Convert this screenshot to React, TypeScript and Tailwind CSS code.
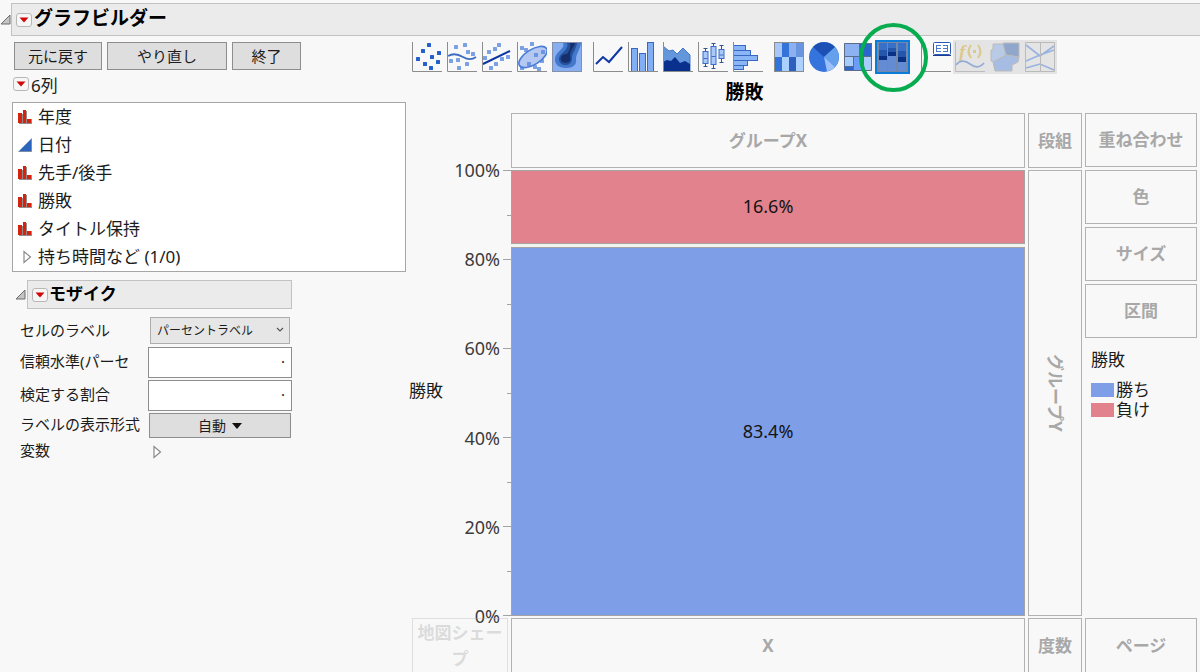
import type { ReactNode } from "react";
import { clsx } from "clsx";

type Point = [number, number];

const COLUMNS = [
  { name: "年度", kind: "nominal" },
  { name: "日付", kind: "continuous" },
  { name: "先手/後手", kind: "nominal" },
  { name: "勝敗", kind: "nominal" },
  { name: "タイトル保持", kind: "nominal" },
  { name: "持ち時間など (1/0)", kind: "group" },
];

const CELLS = [
  { name: "負け", share: 16.6, color: "bg-[#e2828c]" },
  { name: "勝ち", share: 83.4, color: "bg-[#7f9ee8]" },
];

const TICKS = ["100%", "80%", "60%", "40%", "20%", "0%"];

/* Small marks */
function RedTriangle({ label }: { label: string }) {
  return (
    <button
      aria-label={label}
      className="flex h-[14px] w-[16px] shrink-0 items-center justify-center rounded-[3px] border border-[#b8b8b8] bg-[#f6f6f6]"
    >
      <svg width="10" height="6" viewBox="0 0 10 6">
        <path d="M0.5 0.5H9.5L5 5.5Z" fill="#d00808" />
      </svg>
    </button>
  );
}

function OpenMark() {
  return (
    <svg width="11" height="11" viewBox="0 0 11 11" className="shrink-0">
      <path d="M10 1V10H1Z" fill="#c4c4c4" stroke="#6e6e6e" />
    </svg>
  );
}

function ClosedMark() {
  return (
    <svg width="9" height="14" viewBox="0 0 9 14" className="shrink-0">
      <path d="M1 1.5V12.5L7.5 7Z" fill="#fff" stroke="#8a8a8a" strokeWidth="1.2" />
    </svg>
  );
}

function ColumnIcon({ kind }: { kind: string }) {
  if (kind === "group") {
    return (
      <span className="flex w-[14px] justify-end">
        <ClosedMark />
      </span>
    );
  }
  if (kind === "continuous") {
    return (
      <svg width="14" height="14" viewBox="0 0 14 14">
        <path d="M13.5 0.5V13.5H0.5Z" fill="#2c66bc" />
        <path d="M0.5 13.5H13.5V0.5" fill="none" stroke="#7d8ba3" />
      </svg>
    );
  }
  return (
    <svg width="14" height="14" viewBox="0 0 14 14">
      <path d="M1 14V4H5V1H9V9H14V14Z" fill="#9a8c8a" />
      <path d="M0 3H4V13H0ZM5 0H8V13H5ZM9 9H13V13H9Z" fill="#d42410" />
    </svg>
  );
}

/* Toolbar icons */
function Dots({ points, fill }: { points: Point[]; fill: string }) {
  return (
    <>
      {points.map(([x, y]) => (
        <rect key={`${x}-${y}`} x={x - 2} y={y - 2} width="4" height="4" rx="0.5" fill={fill} />
      ))}
    </>
  );
}

function Icon({ axes = true, children }: { axes?: boolean; children: ReactNode }) {
  return (
    <svg width="30" height="30" viewBox="0 0 30 30">
      {children}
      {axes && <path d="M0.5 0V29.5H30" fill="none" stroke="#8c8c8c" />}
    </svg>
  );
}

function Tool({ label, disabled, children }: { label: string; disabled?: boolean; children: ReactNode }) {
  return (
    <button aria-label={label} disabled={disabled} className={clsx(disabled && "opacity-45")}>
      {children}
    </button>
  );
}

function BoxGlyph({ x, top, bottom, high, low }: { x: number; top: number; bottom: number; high: number; low: number }) {
  return (
    <g stroke="#3c6cc4">
      <path d={`M${x} ${high}V${low}M${x - 2} ${high}H${x + 2}M${x - 2} ${low}H${x + 2}`} stroke="#34568c" />
      <rect x={x - 2.5} y={top} width="5" height={bottom - top} fill="#a9c9fc" />
      <path d={`M${x - 2} ${(top + bottom) / 2 + 1}H${x + 2}`} />
    </g>
  );
}

function Toolbar() {
  return (
    <div className="flex h-[34px] items-center">
      <div className="flex gap-[5px]">
        <Tool label="点">
          <Icon>
            <Dots fill="#2460cc" points={[[17, 3], [11, 9], [27, 11], [20, 15], [6, 17], [26, 20], [13, 22], [19, 26]]} />
          </Icon>
        </Tool>
        <Tool label="平滑線">
          <Icon>
            <Dots fill="#7ba0e4" points={[[18, 3], [9, 5], [21, 10], [26, 12], [4, 19], [11, 18], [20, 22], [12, 26]]} />
            <path d="M1 14C6 11 11 12 16 15S25 18 29 15" fill="none" stroke="#3f6cc0" strokeWidth="1.8" />
          </Icon>
        </Tool>
        <Tool label="回帰直線">
          <Icon>
            <Dots fill="#7ba0e4" points={[[17, 3], [13, 7], [7, 10], [26, 15], [20, 17], [3, 16], [14, 22], [9, 26]]} />
            <path d="M1 22L28 9" stroke="#0c34a4" strokeWidth="2" />
          </Icon>
        </Tool>
        <Tool label="楕円">
          <Icon>
            <Dots fill="#7ba0e4" points={[[15, 2], [5, 6], [9, 8], [25, 19], [18, 25], [5, 26], [22, 27]]} />
            <ellipse cx="16" cy="15" rx="16" ry="7.5" transform="rotate(-32 16 15)" fill="#b4c8f2" stroke="#4a7cd8" strokeWidth="1.6" />
            <Dots fill="#6c94e0" points={[[19, 13], [26, 10], [12, 22]]} />
          </Icon>
        </Tool>
        <Tool label="等高線">
          <Icon axes={false}>
            <rect x="0.5" y="0.5" width="29" height="29" fill="#86aef0" />
            <path d="M11 1C14 7 3 9 3 18C3 23 8 26 14 26C21 26 25 23 24 17C24 12 28 8 29 1Z" fill="#4478cc" />
            <path d="M15 1C18 8 7 11 7 17C7 21 10 23 14 23C18 23 20 20 20 16C20 11 24 8 25 1Z" fill="#24509c" />
            <path d="M18 1C19 7 17 9 15 12C10 12 8 15 9 18C10 21 15 22 18 19C19 17 18 15 18 13C18 9 22 5 23 1Z" fill="#142f6c" />
            <rect x="0.5" y="0.5" width="29" height="29" fill="none" stroke="#8490a8" />
          </Icon>
        </Tool>
      </div>

      <div className="ml-[11px] flex gap-[5px]">
        <Tool label="折れ線">
          <Icon>
            <path d="M3 22L10 15L16 20L29 5" fill="none" stroke="#1038a4" strokeWidth="2" />
          </Icon>
        </Tool>
        <Tool label="棒">
          <Icon>
            <g fill="#82aef6" stroke="#3868c0">
              <rect x="3.5" y="6.5" width="6" height="23" />
              <rect x="11.5" y="11.5" width="6" height="18" />
              <rect x="19.5" y="0.5" width="6" height="29" />
            </g>
          </Icon>
        </Tool>
        <Tool label="面">
          <Icon>
            <path d="M0 4L6 9L10 8L14 12L20 6L27 13V29H0Z" fill="#6496dc" stroke="#4478c8" />
            <path d="M0 20L4 18L8 19L12 15L17 21L22 19L27 22V29H0Z" fill="#08308c" />
          </Icon>
        </Tool>
        <Tool label="箱ひげ図">
          <Icon>
            <BoxGlyph x={7.5} top={9.5} bottom={21.5} high={6.5} low={24.5} />
            <BoxGlyph x={15.5} top={4.5} bottom={22.5} high={1.5} low={26.5} />
            <BoxGlyph x={23.5} top={7.5} bottom={16.5} high={3.5} low={20.5} />
          </Icon>
        </Tool>
        <Tool label="ヒストグラム">
          <Icon>
            <g fill="#8ab6f8" stroke="#3868c0">
              <rect x="0.5" y="3.5" width="12" height="5" />
              <rect x="0.5" y="8.5" width="17" height="5" />
              <rect x="0.5" y="13.5" width="24" height="5" />
              <rect x="0.5" y="18.5" width="14" height="5" />
              <rect x="0.5" y="23.5" width="10" height="4" />
            </g>
          </Icon>
        </Tool>
      </div>

      <div className="ml-[11px] flex gap-[5px]">
        <Tool label="ヒートマップ">
          <Icon axes={false}>
            <path d="M1 1H8V15H1Z" fill="#a8c6f8" />
            <path d="M8 1H15V15H8ZM1 15H8V29H1Z" fill="#3474d8" />
            <path d="M15 1H22V15H15Z" fill="#8cb0f0" />
            <path d="M22 1H29V15H22Z" fill="#6894e0" />
            <path d="M8 15H15V29H8ZM22 15H29V29H22Z" fill="#acd0ff" />
            <path d="M15 15H22V29H15Z" fill="#2c60bc" />
            <rect x="0.5" y="0.5" width="29" height="29" fill="none" stroke="#8c8c8c" />
          </Icon>
        </Tool>
        <Tool label="円">
          <Icon axes={false}>
            <circle cx="15" cy="15" r="15" fill="#3474dc" />
            <path d="M15 15L4 5A15 15 0 0 1 26 5Z" fill="#1c50b4" />
            <path d="M15 15L26 5A15 15 0 0 1 26 25Z" fill="#64a0ec" />
            <path d="M15 15L26 25A15 15 0 0 1 18 29.6Z" fill="#9cc0fc" />
          </Icon>
        </Tool>
        <Tool label="ツリーマップ">
          <Icon axes={false}>
            <path d="M0 1H15V14H0Z" fill="#8cb2f2" />
            <path d="M15 1H28V14H15ZM0 24H9V28H0Z" fill="#2a66cc" />
            <path d="M0 14H9V24H0ZM19 14H28V28H19Z" fill="#a8ccfc" />
            <path d="M9 14H19V28H9Z" fill="#6a9cf8" />
            <path d="M0.5 1.5H27.5V28.5H0.5ZM15.5 1V14M0 14.5H28M9.5 14V28M19.5 14V28M0 24.5H9" fill="none" stroke="#5c6c88" />
          </Icon>
        </Tool>
      </div>

      <button
        aria-label="モザイク"
        aria-pressed="true"
        className="relative ml-px flex h-[34px] w-[35px] items-center justify-center border-2 border-[#0b7ad8] bg-[#7487a8]"
      >
        <svg width="29" height="30" viewBox="0 0 29 30">
          <path d="M1 1H9V29H1ZM10 1H18V29H10ZM20 1H28V29H20Z" fill="#2456ac" />
          <path d="M1 14H9V18H1ZM10 10H18V14H10ZM20 15H28V20H20Z" fill="#0a3084" />
          <path d="M1 18H9V29H1ZM10 14H18V29H10ZM20 20H28V29H20Z" fill="#648cd4" />
          <path d="M1 1H9V8H1ZM10 1H18V6H10ZM20 1H28V9H20Z" fill="#3870c8" />
        </svg>
        <span className="pointer-events-none absolute -top-[19px] -left-[18px] size-[69px] rounded-full border-4 border-[#08ac50]" />
      </button>

      <div className="ml-[11px] flex">
        <Tool label="表題ボックス">
          <Icon>
            <rect x="12.5" y="0.5" width="17" height="12" rx="1" fill="#fff" stroke="#2c58b8" />
            <path d="M12 13.5H30" stroke="#1c3c90" />
            <path d="M15 3.5H20M15 6.5H20M15 9.5H20M22 3.5H27M22 6.5H27M22 9.5H27M15.5 3V10M26.5 3V10" fill="none" stroke="#4c78cc" />
          </Icon>
        </Tool>
      </div>

      <div className="ml-[2px] flex h-[34px] items-center gap-[5px] bg-[#e4e4e4] px-[2px]">
        <Tool label="計算式" disabled>
          <Icon>
            <text x="4" y="16" fontSize="19" fontStyle="italic" fontWeight="700" fill="#d4a820" className="font-['Liberation_Serif',serif]">
              f
            </text>
            <path d="M16 3C13 7 13 12 16 16M23 3C26 7 26 12 23 16" fill="none" stroke="#d4a820" strokeWidth="2" />
            <rect x="18" y="8" width="3" height="3" fill="#d4a820" />
            <path d="M1 23C6 17 11 19 15 22S24 27 29 21" fill="none" stroke="#3468cc" strokeWidth="1.6" />
          </Icon>
        </Tool>
        <Tool label="地図シェープ" disabled>
          <Icon axes={false}>
            <path d="M3 2H13L16 13L4 20L1 19V8H3Z" fill="#86acec" stroke="#888" />
            <path d="M13 1H29V15L16 13Z" fill="#2c5cac" stroke="#888" />
            <path d="M16 13L29 15L28 20L22 23V29H5L3 20Z" fill="#5c8ce0" stroke="#888" />
          </Icon>
        </Tool>
        <Tool label="パラレルプロット" disabled>
          <Icon axes={false}>
            <path d="M1 3L15 14L29 4M1 19L15 13L29 8M1 26L15 22L29 28" fill="none" stroke="#3f78dc" strokeWidth="1.6" />
            <path d="M0.5 0.5H29.5V29.5H0.5ZM15.5 0V30" fill="none" stroke="#888" />
          </Icon>
        </Tool>
      </div>
    </div>
  );
}

function DropZone({ children, className }: { children: ReactNode; className?: string }) {
  return (
    <div
      className={clsx(
        "flex items-center justify-center border border-[#b2b2b2] text-[17px] leading-[26px] font-bold text-[#a8a8a8]",
        className
      )}
    >
      {children}
    </div>
  );
}

function ControlPanel() {
  const button = "h-[28px] border border-[#8e8e8e] bg-[#dedede] text-[15px] leading-[24px]";
  const input = "h-[31px] border border-[#8e8e8e] bg-white px-[6px] pb-[4px] text-right";
  return (
    <aside className="w-[412px] shrink-0 pt-[6px] pl-[12px]">
      <div className="flex gap-[5px] pl-[2px]">
        <button className={clsx(button, "w-[88px]")}>元に戻す</button>
        <button className={clsx(button, "w-[120px]")}>やり直し</button>
        <button className={clsx(button, "w-[69px]")}>終了</button>
      </div>

      <div className="mt-[4px] flex h-[24px] items-center gap-[2px] pl-px text-[17px]">
        <div className="-mt-[4px] flex">
          <RedTriangle label="列メニュー" />
        </div>
        6列
      </div>

      <ul className="mt-[4px] mr-[6px] border border-[#a6a6a6] bg-white">
        {COLUMNS.map((column) => (
          <li key={column.name} className="flex h-[28px] items-center gap-[6px] pl-[5px] text-[17px]">
            <ColumnIcon kind={column.kind} />
            {column.name}
          </li>
        ))}
      </ul>

      <div className="mt-[8px] flex items-center gap-px pl-[3px]">
        <OpenMark />
        <div className="flex h-[29px] w-[265px] items-center gap-px border border-[#c2c2c2] bg-[#ebebeb] pl-[4px]">
          <RedTriangle label="モザイクメニュー" />
          <h2 className="pb-[2px] text-[17px] leading-[24px] font-bold text-black">モザイク</h2>
        </div>
      </div>

      {/* Mosaic options */}
      <div className="mt-[8px] ml-[8px] grid grid-cols-[128px_144px] items-center gap-y-[2px] text-[15px] leading-[20px] whitespace-nowrap">
        <label htmlFor="cell-label" className="pb-[3px]">セルのラベル</label>
        <div className="relative mx-[2px] mb-px">
          <select
            id="cell-label"
            className="h-[27px] w-full appearance-none border border-[#adadad] bg-[#e6e6e6] pl-[6px] text-[12px]"
          >
            <option>パーセントラベル</option>
          </select>
          <svg width="8" height="6" viewBox="0 0 8 6" className="pointer-events-none absolute top-[10px] right-[6px]">
            <path d="M1 1L4 4L7 1" fill="none" stroke="#555" strokeWidth="1.2" />
          </svg>
        </div>

        <label htmlFor="confidence" className="pb-[3px]">信頼水準(パーセ</label>
        <input id="confidence" defaultValue="·" className={input} />

        <label htmlFor="ratio" className="pb-[3px]">検定する割合</label>
        <input id="ratio" defaultValue="·" className={input} />

        <span id="format-label" className="pb-[3px]">ラベルの表示形式</span>
        <button
          aria-describedby="format-label"
          className="mx-px flex h-[25px] items-center justify-center gap-[6px] border border-[#8e8e8e] bg-[#dedede] text-[14px]"
        >
          自動
          <svg width="10" height="6" viewBox="0 0 10 6">
            <path d="M0 0H10L5 6Z" fill="#111" />
          </svg>
        </button>

        <span className="pb-[3px]">変数</span>
        <button aria-label="変数を開く" className="ml-[5px] justify-self-start">
          <ClosedMark />
        </button>
      </div>
    </aside>
  );
}

function YAxis() {
  return (
    <div className="-mr-[3px] -ml-[3px] flex">
      <span className="flex-1 self-center pb-[4px] text-[17px]">勝敗</span>
      <div className="flex flex-col justify-between text-right text-[18px] leading-[18px] text-[#3c3c3c]">
        {TICKS.map((tick) => (
          <span key={tick} className="-my-[9px]">
            {tick}
          </span>
        ))}
      </div>
      <div className="ml-[3px] flex w-[8px] flex-col items-end justify-between">
        {Array.from({ length: 11 }, (_, i) => (
          <span key={i} className={clsx("h-px bg-[#a4a4a4]", i % 2 === 0 ? "w-[8px]" : "w-[4px]")} />
        ))}
      </div>
    </div>
  );
}

function Mosaic() {
  return (
    <div className="flex flex-col gap-[3px] bg-[#f4f4f0]">
      {CELLS.map((cell) => (
        <div
          key={cell.name}
          className={clsx(
            "flex basis-0 items-center justify-center text-[18px] text-[#141414] ring-1 ring-[#a4a4a4] ring-inset",
            cell.color
          )}
          style={{ flexGrow: cell.share }}
        >
          {cell.share}%
        </div>
      ))}
    </div>
  );
}

export default function App() {
  return (
    <div className="flex min-h-screen flex-col overflow-hidden bg-[#f8f8f8] font-['Noto_Sans','Noto_Sans_CJK_JP',sans-serif] text-[#1c1c1c]">
      <header className="flex items-center pt-[3px]">
        <OpenMark />
        <div className="flex h-[33px] flex-1 items-center gap-[2px] border border-r-0 border-[#c2c2c2] bg-[#ebebeb] pl-[4px]">
          <RedTriangle label="グラフビルダーメニュー" />
          <h1 className="pb-[3px] text-[19px] leading-[28px] font-bold text-black">グラフビルダー</h1>
        </div>
      </header>

      <main className="flex flex-1">
        <ControlPanel />

        <section className="flex flex-1 flex-col pt-[4px] pr-[3px]">
          <Toolbar />

          <div className="flex flex-1 gap-[3px]">
            <div className="flex flex-1 flex-col">
              <h2 className="h-[39px] pt-[5px] pr-[5px] text-center text-[19px] leading-[26px] font-bold text-black">勝敗</h2>
              <div className="grid flex-1 grid-cols-[96px_1fr_54px] grid-rows-[55px_1fr_54px] gap-x-[3px] gap-y-[2px]">
                <span />
                <DropZone>グループX</DropZone>
                <DropZone>段組</DropZone>

                <YAxis />
                <Mosaic />
                <DropZone>
                  <span className="[text-orientation:sideways] [writing-mode:vertical-rl]">グループY</span>
                </DropZone>

                <DropZone className="border-b-0 text-center opacity-35">地図シェープ</DropZone>
                <DropZone className="border-b-0">X</DropZone>
                <DropZone className="border-b-0">度数</DropZone>
              </div>
            </div>

            <div className="flex w-[112px] flex-col gap-[3px] pt-[39px]">
              <DropZone className="h-[54px]">重ね合わせ</DropZone>
              <DropZone className="h-[54px]">色</DropZone>
              <DropZone className="h-[54px]">サイズ</DropZone>
              <DropZone className="h-[54px]">区間</DropZone>

              {/* Legend */}
              <div className="mt-[9px] pl-[6px] text-[17px] leading-[20px]">
                <h3 className="mb-[10px]">勝敗</h3>
                <ul>
                  {[...CELLS].reverse().map((cell) => (
                    <li key={cell.name} className="flex items-center gap-[2px]">
                      <span className={clsx("h-[14px] w-[23px]", cell.color)} />
                      {cell.name}
                    </li>
                  ))}
                </ul>
              </div>

              <DropZone className="mt-auto h-[54px] border-b-0">ページ</DropZone>
            </div>
          </div>
        </section>
      </main>
    </div>
  );
}
